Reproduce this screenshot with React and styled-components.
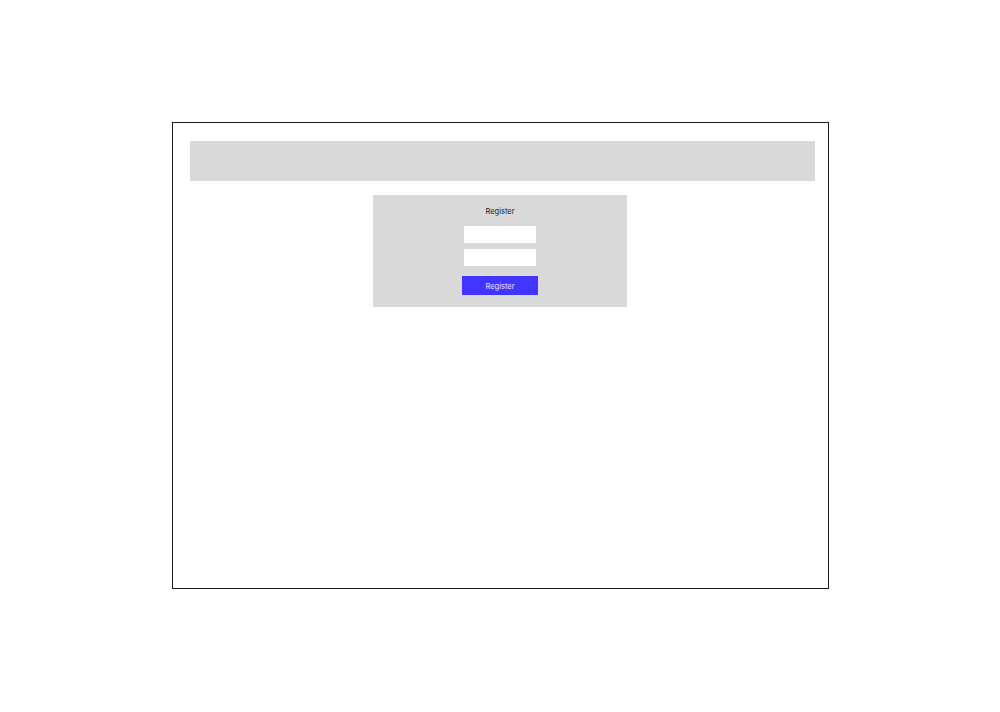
import React from "react";
import styled, { createGlobalStyle } from "styled-components";

const GlobalStyle = createGlobalStyle`
  html, body {
    margin: 0;
    padding: 0;
    background: #ffffff;
    font-family: Inter, "Liberation Sans", sans-serif;
  }
`;

const Frame = styled.div`
  box-sizing: border-box;
  width: 657px;
  height: 467px;
  margin: 122px 0 0 172px;
  border: 1px solid #1a1a1a;
  padding: 18px 12px 0 17px;
  display: flex;
  flex-direction: column;
`;

const HeaderBar = styled.div`
  height: 40px;
  width: 625px;
  background: #d9d9d9;
`;

const Main = styled.div`
  display: flex;
  justify-content: center;
  padding-top: 14px;
  padding-right: 6px;
`;

const Card = styled.form`
  box-sizing: border-box;
  width: 254px;
  height: 112px;
  background: #d9d9d9;
  display: flex;
  flex-direction: column;
  align-items: center;
  padding-top: 11px;
`;

const Title = styled.div`
  font-size: 7.5px;
  line-height: 12px;
  color: #222222;
  margin-bottom: 8px;
`;

const Field = styled.input`
  box-sizing: border-box;
  width: 72px;
  height: 17px;
  border: none;
  background: #ffffff;
  margin-bottom: ${(p) => p.$gap}px;
  padding: 0 4px;
  outline: none;
`;

const Button = styled.button`
  box-sizing: border-box;
  width: 76px;
  height: 19px;
  border: none;
  background: #4434ff;
  color: #e4e2ff;
  font-family: Inter, "Liberation Sans", sans-serif;
  font-size: 7.5px;
  padding: 2px 0 0;
  cursor: pointer;
`;

export default function App() {
  return (
    <>
      <GlobalStyle />
      <Frame>
        <HeaderBar />
        <Main>
          <Card onSubmit={(e) => e.preventDefault()}>
            <Title>Register</Title>
            <Field $gap={6} />
            <Field $gap={10} type="password" />
            <Button type="submit">Register</Button>
          </Card>
        </Main>
      </Frame>
    </>
  );
}
